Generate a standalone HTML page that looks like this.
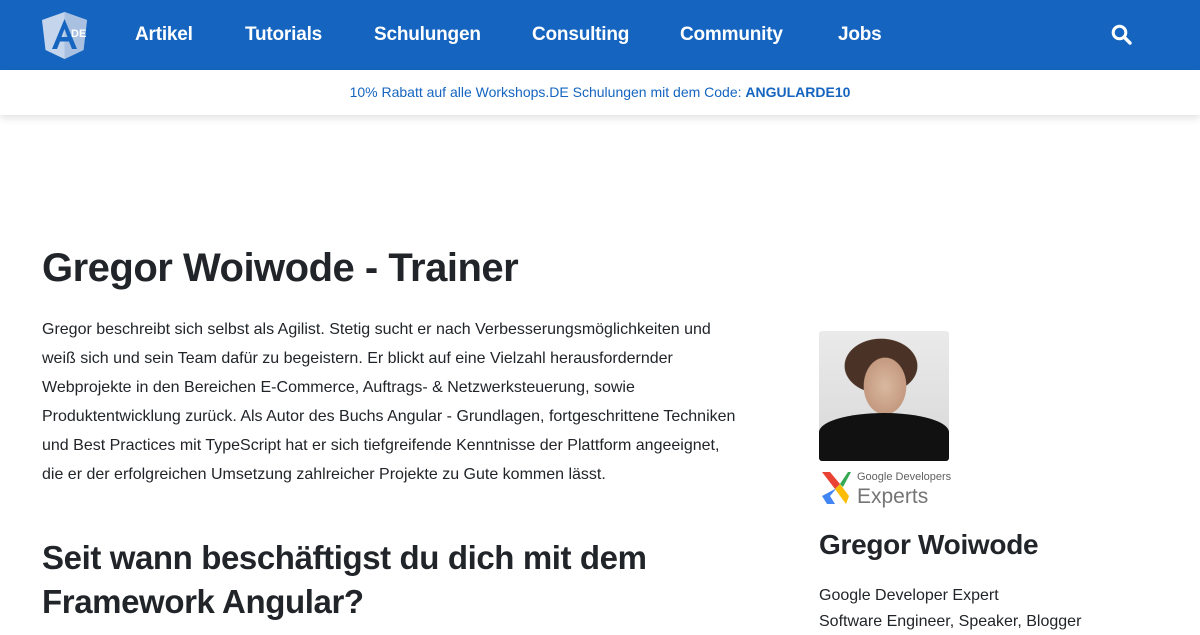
<!DOCTYPE html>
<html><head><meta charset="utf-8"><style>
*{margin:0;padding:0;box-sizing:border-box}
body{width:1200px;height:627px;overflow:hidden;background:#fff;font-family:"Liberation Sans",sans-serif;color:#212529}
.nav{height:70px;background:#1565c0;position:relative}
.nav a{position:absolute;top:24px;color:#fff;font-size:19px;font-weight:bold;text-decoration:none;letter-spacing:-0.2px}
.banner{height:45px;background:#fff;box-shadow:0 3px 8px rgba(0,0,0,.12);text-align:center;font-size:14px;line-height:44px;color:#1565c0;position:relative}
h1{position:absolute;left:42px;top:246px;font-size:40px;font-weight:bold;letter-spacing:-0.5px}
.p{position:absolute;left:42px;top:315px;font-size:16px;line-height:29px;white-space:nowrap}
h2{position:absolute;left:42px;top:536px;font-size:33px;line-height:44px;font-weight:bold;letter-spacing:-0.4px}
.photo{position:absolute;left:819px;top:331px;width:130px;height:130px;border-radius:3px;background:radial-gradient(ellipse 30px 40px at 66px 55px,#d9b8a0 0,#c49a80 70%,transparent 72%),radial-gradient(ellipse 40px 30px at 62px 35px,#4a3326 0,#4a3326 90%,transparent 92%),linear-gradient(#eaeaea,#d8d8d8);overflow:hidden}
.photo:after{content:"";position:absolute;left:0;bottom:0;width:130px;height:48px;background:#111;border-radius:50% 50% 0 0/40% 40% 0 0}
.gde{position:absolute;left:821px;top:468px}
.side h3{position:absolute;left:819px;top:529px;font-size:28px;font-weight:bold;letter-spacing:-0.3px}
.side p{position:absolute;left:819px;top:583px;font-size:16px;line-height:26px}
</style></head><body>
<div class="nav">
<svg style="position:absolute;left:42px;top:12px" width="45" height="47" viewBox="0 0 45 47">
<path d="M22.5 0L0 8l3.5 30 19 9 19-9L45 8z" fill="#c5d6ec"/>
<path d="M22.5 0L45 8l-3.5 30-19 9z" fill="#a9c0e0"/>
<path d="M22.5 7L10 37h5l3-7.5h9L30 37h5z M19.5 25l3-8 3 8z" fill="#1565c0"/>
<text x="29" y="25" font-size="11" font-weight="bold" fill="#fff" font-family="Liberation Sans">DE</text>
</svg>
<a style="left:135px">Artikel</a><a style="left:245px">Tutorials</a><a style="left:374px">Schulungen</a><a style="left:532px">Consulting</a><a style="left:680px">Community</a><a style="left:838px">Jobs</a>
<svg style="position:absolute;left:1111px;top:24px" width="21" height="21" viewBox="0 0 21 21"><circle cx="8.5" cy="8.5" r="6.3" fill="none" stroke="#fff" stroke-width="3"/><path d="M13 13l6 6" stroke="#fff" stroke-width="3.4" stroke-linecap="round"/></svg>
</div>
<div class="banner">10% Rabatt auf alle Workshops.DE Schulungen mit dem Code: <b>ANGULARDE10</b></div>
<h1>Gregor Woiwode - Trainer</h1>
<div class="p">Gregor beschreibt sich selbst als Agilist. Stetig sucht er nach Verbesserungsmöglichkeiten und<br>weiß sich und sein Team dafür zu begeistern. Er blickt auf eine Vielzahl herausfordernder<br>Webprojekte in den Bereichen E-Commerce, Auftrags- &amp; Netzwerksteuerung, sowie<br>Produktentwicklung zurück. Als Autor des Buchs Angular - Grundlagen, fortgeschrittene Techniken<br>und Best Practices mit TypeScript hat er sich tiefgreifende Kenntnisse der Plattform angeeignet,<br>die er der erfolgreichen Umsetzung zahlreicher Projekte zu Gute kommen lässt.</div>
<h2>Seit wann beschäftigst du dich mit dem<br>Framework Angular?</h2>
<div class="photo"></div>
<svg class="gde" width="130" height="40" viewBox="0 0 130 40">
<path d="M1 4h8l10 12-5 5z" fill="#ea4335"/>
<path d="M14 21l5-5-10 12H1z" fill="#4285f4"/>
<path d="M1 28h8l5 8H6z" fill="#4285f4"/>
<path d="M19 16l9 12-3 8-11-15z" fill="#fbbc05"/>
<path d="M19 16l8-12h3l-8 15z" fill="#34a853"/>
<text x="36" y="12" font-size="11" fill="#616161" font-family="Liberation Sans">Google Developers</text>
<text x="36" y="35" font-size="21" fill="#757575" font-family="Liberation Sans">Experts</text>
</svg>
<div class="side"><h3>Gregor Woiwode</h3><p>Google Developer Expert<br>Software Engineer, Speaker, Blogger</p></div>
</body></html>
